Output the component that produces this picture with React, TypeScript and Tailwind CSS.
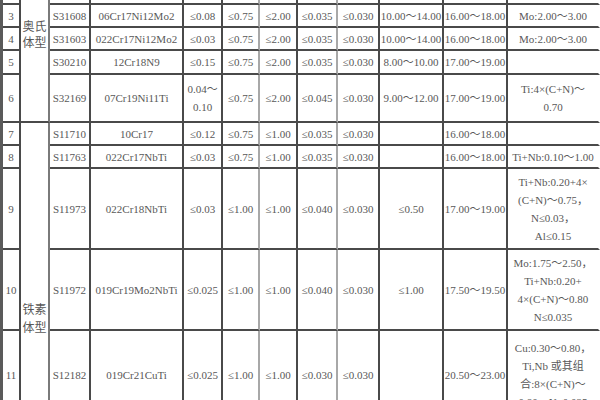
import React from "react";

const colRight = [
  "border-r-[#4a4a4a]", // 1 no
  "border-r-[#7a7a7a]", // 2 category
  "border-r-[#4a4a4a]", // 3 code
  "border-r-[#4a4a4a]", // 4 grade
  "border-r-[#4a4a4a]", // C
  "border-r-[#a8a8a8]", // Si
  "border-r-[#4a4a4a]", // Mn
  "border-r-[#a8a8a8]", // P
  "border-r-[#4a4a4a]", // S
  "border-r-[#4a4a4a]", // Ni
  "border-r-[#4a4a4a]", // Cr
  "border-r-transparent", // other
];

type Row = {
  no: string;
  code: string;
  grade: string;
  c: React.ReactNode;
  si: string;
  mn: string;
  p: string;
  s: string;
  ni: React.ReactNode;
  cr: string;
  other: React.ReactNode;
};

const rows: Row[] = [
  { no: "3", code: "S31608", grade: "06Cr17Ni12Mo2", c: "≤0.08", si: "≤0.75", mn: "≤2.00", p: "≤0.035", s: "≤0.030", ni: "10.00～14.00", cr: "16.00～18.00", other: "Mo:2.00～3.00" },
  { no: "4", code: "S31603", grade: "022Cr17Ni12Mo2", c: "≤0.03", si: "≤0.75", mn: "≤2.00", p: "≤0.035", s: "≤0.030", ni: "10.00～14.00", cr: "16.00～18.00", other: "Mo:2.00～3.00" },
  { no: "5", code: "S30210", grade: "12Cr18N9", c: "≤0.15", si: "≤0.75", mn: "≤2.00", p: "≤0.035", s: "≤0.030", ni: "8.00～10.00", cr: "17.00～19.00", other: "" },
  { no: "6", code: "S32169", grade: "07Cr19Ni11Ti", c: (<>0.04～<br />0.10</>), si: "≤0.75", mn: "≤2.00", p: "≤0.045", s: "≤0.030", ni: "9.00～12.00", cr: "17.00～19.00", other: (<>Ti:4×(C+N)～<br />0.70</>) },
  { no: "7", code: "S11710", grade: "10Cr17", c: "≤0.12", si: "≤0.75", mn: "≤1.00", p: "≤0.035", s: "≤0.030", ni: "", cr: "16.00～18.00", other: "" },
  { no: "8", code: "S11763", grade: "022Cr17NbTi", c: "≤0.03", si: "≤0.75", mn: "≤1.00", p: "≤0.035", s: "≤0.030", ni: "", cr: "16.00～18.00", other: "Ti+Nb:0.10～1.00" },
  { no: "9", code: "S11973", grade: "022Cr18NbTi", c: "≤0.03", si: "≤1.00", mn: "≤1.00", p: "≤0.040", s: "≤0.030", ni: "≤0.50", cr: "17.00～19.00", other: (<>Ti+Nb:0.20+4×<br />(C+N)～0.75，<br />N≤0.03，<br />Al≤0.15</>) },
  { no: "10", code: "S11972", grade: "019Cr19Mo2NbTi", c: "≤0.025", si: "≤1.00", mn: "≤1.00", p: "≤0.040", s: "≤0.030", ni: "≤1.00", cr: "17.50～19.50", other: (<>Mo:1.75～2.50，<br />Ti+Nb:0.20+<br />4×(C+N)～0.80<br />N≤0.035</>) },
  { no: "11", code: "S12182", grade: "019Cr21CuTi", c: "≤0.025", si: "≤1.00", mn: "≤1.00", p: "≤0.030", s: "≤0.030", ni: "", cr: "20.50～23.00", other: (<>Cu:0.30～0.80，<br />Ti,Nb 或其组<br />合:8×(C+N)～<br />0.80，N≤0.025</>) },
];

function Cell({ col, children, extra = "" }: { col: number; children?: React.ReactNode; extra?: string }) {
  return (
    <div
      className={`flex items-center justify-center text-center whitespace-nowrap leading-[18px] border-b-2 border-r-2 border-b-[#4a4a4a] ${colRight[col]} ${extra}`}
    >
      {children}
    </div>
  );
}

export default function App() {
  return (
    <div className="w-[600px] h-[400px] overflow-hidden bg-white">
      <div
        className="grid grid-cols-[18px_29px_41px_93px_39px_37px_38px_40px_42px_64px_64px_92px] grid-rows-[5px_23px_23px_24px_48px_23px_23px_81px_81px_90px] border-l-[3px] border-l-[#5a5a5a] text-[11px] text-[#585858]"
        style={{ fontFamily: '"Liberation Serif", "Noto Sans CJK SC", serif' }}
      >
        {/* top partial row */}
        <Cell col={0} />
        <div className={`row-span-5 flex flex-col items-center justify-start pt-[19px] text-[12px] leading-[16px] border-b-2 border-r-2 border-b-[#4a4a4a] ${colRight[1]}`}>
          <span>奥氏</span>
          <span>体型</span>
        </div>
        {[2, 3, 4, 5, 6, 7, 8, 9, 10, 11].map((c) => (
          <Cell key={c} col={c} />
        ))}
        {rows.map((r, i) => (
          <React.Fragment key={r.no}>
            <Cell col={0}>{r.no}</Cell>
            {i === 4 && (
              <div className={`row-span-5 flex flex-col items-center justify-start pt-[178px] text-[12px] leading-[18px] border-b-2 border-r-2 border-b-[#4a4a4a] ${colRight[1]}`}>
                <span>铁素</span>
                <span>体型</span>
              </div>
            )}
            <Cell col={2}>{r.code}</Cell>
            <Cell col={3}>{r.grade}</Cell>
            <Cell col={4}>{r.c}</Cell>
            <Cell col={5}>{r.si}</Cell>
            <Cell col={6}>{r.mn}</Cell>
            <Cell col={7}>{r.p}</Cell>
            <Cell col={8}>{r.s}</Cell>
            <Cell col={9}>{r.ni}</Cell>
            <Cell col={10}>{r.cr}</Cell>
            <Cell col={11}>{r.other}</Cell>
          </React.Fragment>
        ))}
      </div>
    </div>
  );
}
